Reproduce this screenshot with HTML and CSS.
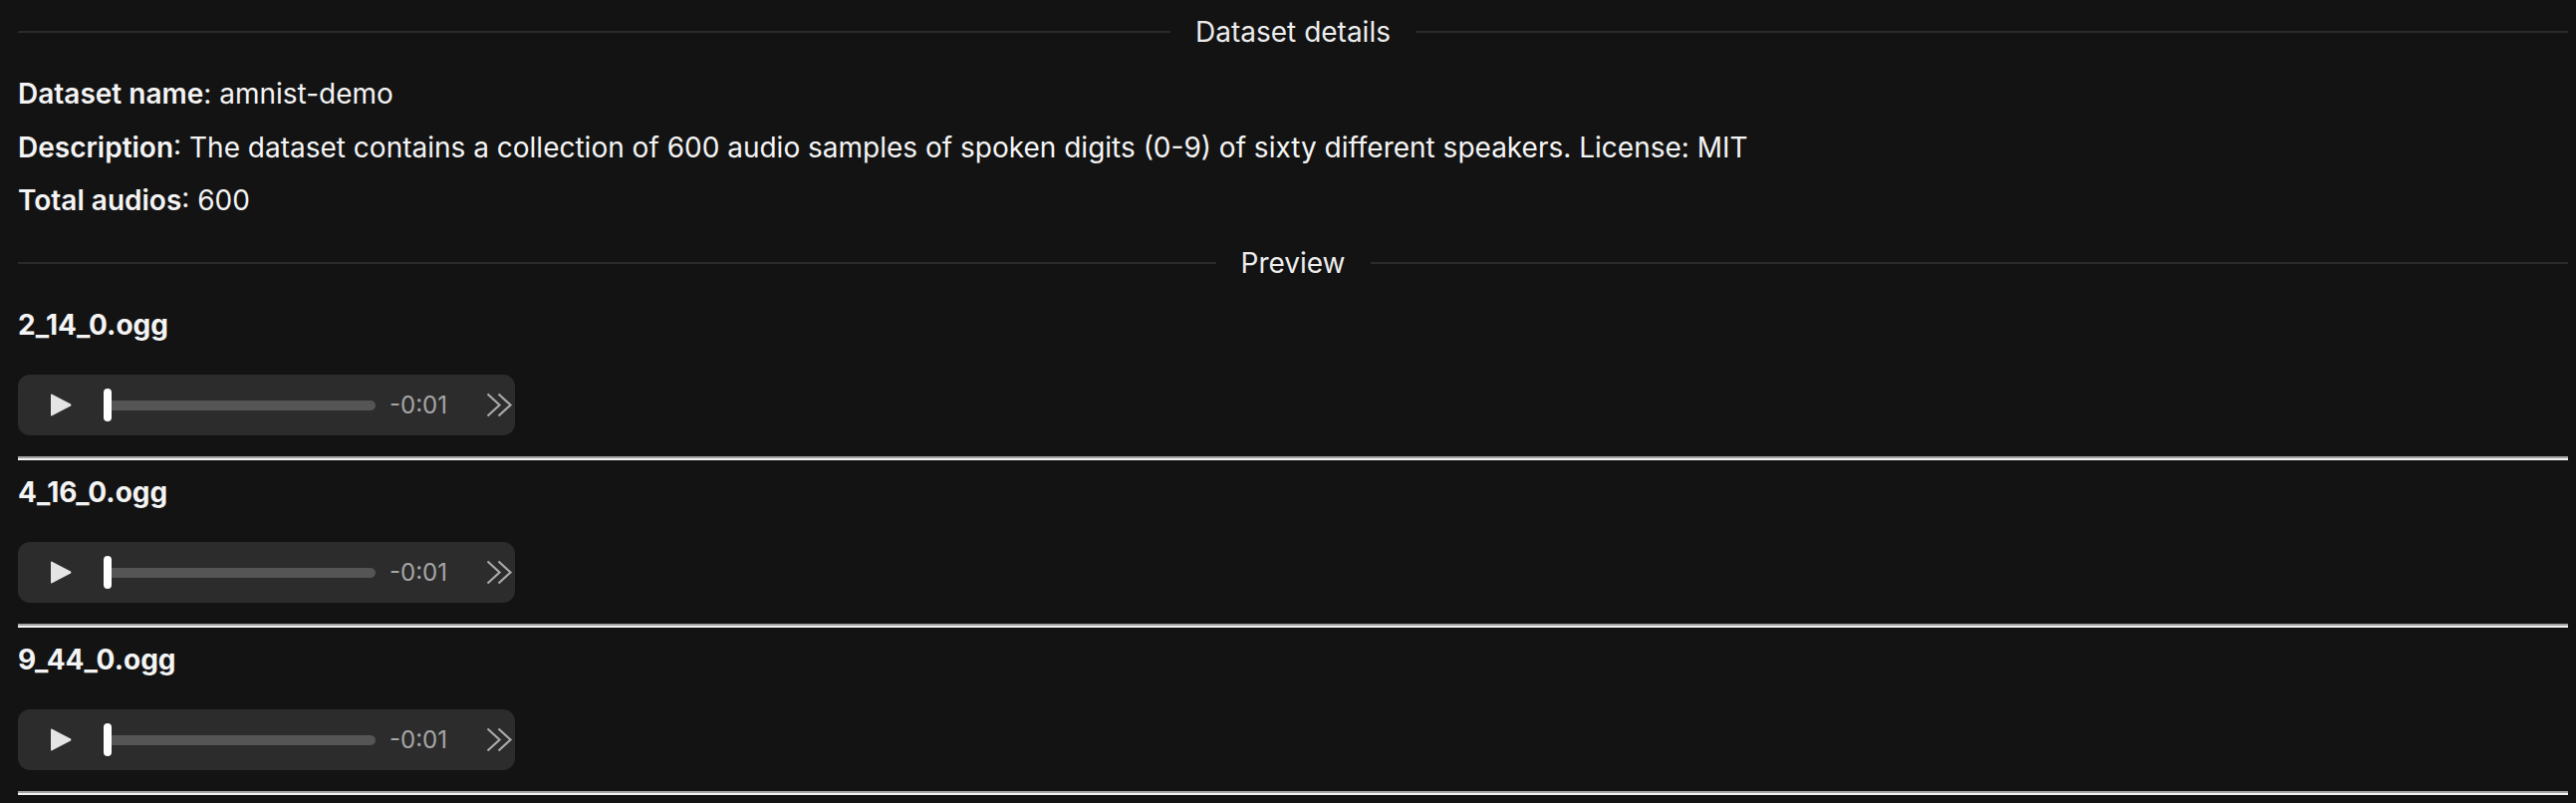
FILE: index.html
```html
<!DOCTYPE html>
<html lang="en">
<head>
<meta charset="utf-8">
<title>Dataset details</title>
<link rel="stylesheet" href="styles.css">
</head>
<body>
<div class="page">
  <div class="divider first"><span>Dataset details</span></div>
  <div class="details">
    <p><strong>Dataset name</strong>: amnist-demo</p>
    <p><strong>Description</strong>: The dataset contains a collection of 600 audio samples of spoken digits (0-9) of sixty different speakers. License: MIT</p>
    <p><strong>Total audios</strong>: 600</p>
  </div>
  <div class="divider preview"><span>Preview</span></div>
  <div class="list">
    <div class="item">
      <div class="filename">2_14_0.ogg</div>
      <div class="player">
        <svg class="play" width="22" height="23" viewBox="0 0 22 23"><path d="M1 1.5 Q1 0 2.3 0.7 L21 10.6 Q22 11.5 21 12.4 L2.3 22.3 Q1 23 1 21.5 Z" fill="#e4e4e4"/></svg>
        <div class="track"><div class="thumb"></div></div>
        <span class="time">-0:01</span>
        <svg class="more" width="27" height="25" viewBox="0 0 27 25"><path d="M1.5 1.5 L13.5 12.5 L1.5 23.5 M12.5 1.5 L24.5 12.5 L12.5 23.5" fill="none" stroke="#a9a9a9" stroke-width="2.2"/></svg>
      </div>
      <div class="rule"></div>
    </div>
    <div class="item">
      <div class="filename">4_16_0.ogg</div>
      <div class="player">
        <svg class="play" width="22" height="23" viewBox="0 0 22 23"><path d="M1 1.5 Q1 0 2.3 0.7 L21 10.6 Q22 11.5 21 12.4 L2.3 22.3 Q1 23 1 21.5 Z" fill="#e4e4e4"/></svg>
        <div class="track"><div class="thumb"></div></div>
        <span class="time">-0:01</span>
        <svg class="more" width="27" height="25" viewBox="0 0 27 25"><path d="M1.5 1.5 L13.5 12.5 L1.5 23.5 M12.5 1.5 L24.5 12.5 L12.5 23.5" fill="none" stroke="#a9a9a9" stroke-width="2.2"/></svg>
      </div>
      <div class="rule"></div>
    </div>
    <div class="item">
      <div class="filename">9_44_0.ogg</div>
      <div class="player">
        <svg class="play" width="22" height="23" viewBox="0 0 22 23"><path d="M1 1.5 Q1 0 2.3 0.7 L21 10.6 Q22 11.5 21 12.4 L2.3 22.3 Q1 23 1 21.5 Z" fill="#e4e4e4"/></svg>
        <div class="track"><div class="thumb"></div></div>
        <span class="time">-0:01</span>
        <svg class="more" width="27" height="25" viewBox="0 0 27 25"><path d="M1.5 1.5 L13.5 12.5 L1.5 23.5 M12.5 1.5 L24.5 12.5 L12.5 23.5" fill="none" stroke="#a9a9a9" stroke-width="2.2"/></svg>
      </div>
      <div class="rule"></div>
    </div>
  </div>
</div>
</body>
</html>
```
FILE: styles.css
```css
html, body {
  margin: 0;
  padding: 0;
  background: #131313;
}
body {
  font-family: Inter, "Noto Sans", sans-serif;
  color: #f4f4f4;
  height: 806px;
  overflow: hidden;
}
.page {
  padding: 0 8px 0 18px;
}
.divider {
  display: flex;
  align-items: center;
  gap: 25px;
  font-size: 28px;
  line-height: 36px;
  color: #ececec;
}
.divider::before,
.divider::after {
  content: "";
  flex: 1;
  height: 2px;
  background: #2a2a2a;
}
.divider.first {
  height: 64px;
}
.divider.preview {
  height: 36px;
  margin-top: 27px;
}
.details {
  margin-top: 12px;
  display: flex;
  flex-direction: column;
  gap: 17.5px;
}
.details p {
  margin: 0;
  font-size: 28px;
  line-height: 36px;
}
.details strong {
  font-weight: 600;
}
.list {
  margin-top: 26px;
  display: flex;
  flex-direction: column;
  gap: 14px;
}
.item {
  display: flex;
  flex-direction: column;
}
.filename {
  font-size: 28px;
  line-height: 36px;
  font-weight: 700;
  margin-bottom: 32px;
}
.player {
  width: 499px;
  height: 61px;
  box-sizing: border-box;
  background: #2c2c2c;
  border-radius: 12px;
  display: flex;
  align-items: center;
  padding-left: 32px;
  overflow: hidden;
}
.play {
  flex: none;
  margin-right: 32px;
}
.track {
  width: 273px;
  height: 10px;
  background: #555555;
  border-radius: 5px;
  display: flex;
  align-items: center;
  flex: none;
}
.thumb {
  width: 8px;
  height: 33px;
  background: #ffffff;
  border-radius: 4px;
}
.time {
  margin-left: 14px;
  font-size: 24px;
  color: #a6a6a6;
  width: 60px;
}
.more {
  flex: none;
  margin-left: 37px;
}
.rule {
  margin-top: 21px;
  height: 0;
  border-top: 2px solid #a3a3a3;
  border-bottom: 2px solid #f2f2f2;
}
```
